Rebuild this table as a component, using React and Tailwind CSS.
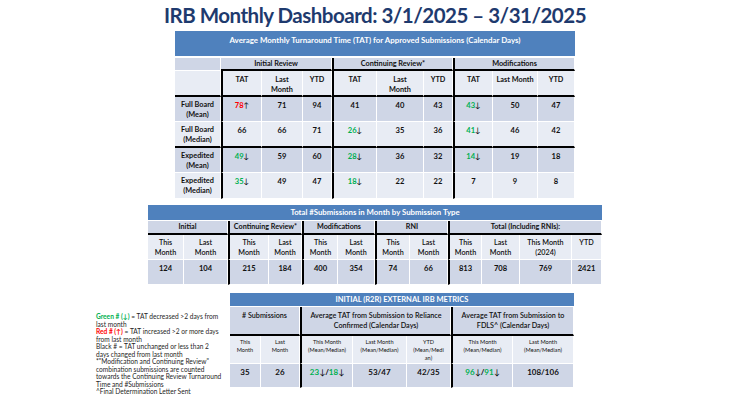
import React from "react";

const DARK = "bg-[#cfd6e6]";
const LIGHT = "bg-[#e8ecf4]";

function C({ bg, bl, bb, className = "", children }) {
  return (
    <div
      className={[
        "flex flex-col items-center text-center border-white border-r",
        bb ? "border-b-2 border-b-black" : "border-b",
        bl ? "border-l-2 border-l-black" : "",
        bg,
        className,
      ].join(" ")}
    >
      {children}
    </div>
  );
}

const G = ({ children }) => <span className="text-[#00b050]">{children}</span>;
const R = ({ children }) => <span className="text-[#ff0000]">{children}</span>;
const Dn = () => <span className="font-normal text-black">↓</span>;
const Up = () => <span className="font-normal text-black">↑</span>;

function Table1() {
  const rows = [
    { h: ["Full Board", "(Mean)"], bg: DARK, bb: false, cells: [<><R>78</R><Up /></>, "71", "94", "41", "40", "43", <><G>43</G><Dn /></>, "50", "47"] },
    { h: ["Full Board", "(Median)"], bg: LIGHT, bb: true, cells: ["66", "66", "71", <><G>26</G><Dn /></>, "35", "36", <><G>41</G><Dn /></>, "46", "42"] },
    { h: ["Expedited", "(Mean)"], bg: DARK, bb: false, cells: [<><G>49</G><Dn /></>, "59", "60", <><G>28</G><Dn /></>, "36", "32", <><G>14</G><Dn /></>, "19", "18"] },
    { h: ["Expedited", "(Median)"], bg: LIGHT, bb: false, cells: [<><G>35</G><Dn /></>, "49", "47", <><G>18</G><Dn /></>, "22", "22", "7", "9", "8"] },
  ];
  const heights = ["h-[25px]", "h-[26px]", "h-[25px]", "h-[26px]"];
  const colHdr = [["TAT"], ["Last", "Month"], ["YTD"], ["TAT"], ["Last", "Month"], ["YTD"], ["TAT"], ["Last Month"], ["YTD"]];
  return (
    <div className="w-[400px]">
      <div className="h-[25px] mb-[2px] bg-[#4f81bd] text-white font-bold text-[7.9px] leading-[10px] flex justify-center pt-[4px]">
        Average Monthly Turnaround Time (TAT) for Approved Submissions (Calendar Days)
      </div>
      <div className="grid grid-cols-[46px_41px_41px_29px_45px_47px_29px_40px_45px_37px] text-[7.3px] leading-[9.5px] text-[#111]">
        <C bg={DARK} className="h-[13px]" />
        <C bg={DARK} bb className="col-span-3 h-[13px] justify-center font-bold">Initial Review</C>
        <C bg={DARK} bb bl className="col-span-3 h-[13px] justify-center font-bold">Continuing Review*</C>
        <C bg={DARK} bb bl className="col-span-3 h-[13px] justify-center font-bold">Modifications</C>
        <C bg={LIGHT} bb className="h-[26px]" />
        {colHdr.map((t, i) => (
          <C key={i} bg={LIGHT} bb bl={i % 3 === 0} className="h-[26px] pt-[4px] font-bold">
            {t.map((l, j) => <div key={j}>{l}</div>)}
          </C>
        ))}
        {rows.map((r, ri) => (
          <React.Fragment key={ri}>
            <C bg={r.bg} bb={r.bb} className={heights[ri] + " pt-[3px] font-bold leading-[10px]"}>
              <div>{r.h[0]}</div>
              <div>{r.h[1]}</div>
            </C>
            {r.cells.map((c, ci) => (
              <C key={ci} bg={r.bg} bb={r.bb} bl={ci % 3 === 0} className={heights[ri] + " pt-[3px] font-bold text-[7.6px] leading-[10px]"}>
                <div>{c}</div>
              </C>
            ))}
          </React.Fragment>
        ))}
      </div>
    </div>
  );
}

function Table2() {
  const groups = [
    ["Initial", "col-span-2", false],
    ["Continuing Review*", "col-span-2", true],
    ["Modifications", "col-span-2", true],
    ["RNI", "col-span-2", true],
    ["Total (Including RNIs):", "col-span-4", true],
  ];
  const hdr = [
    ["This", "Month"], ["Last", "Month"], ["This", "Month"], ["Last", "Month"], ["This", "Month"], ["Last", "Month"],
    ["This", "Month"], ["Last", "Month"], ["This", "Month"], ["Last", "Month"], ["This Month", "(2024)"], ["YTD"],
  ];
  const data = ["124", "104", "215", "184", "400", "354", "74", "66", "813", "708", "769", "2421"];
  const blk = [2, 4, 6, 8];
  return (
    <div className="w-[454px] mt-[6px]">
      <div className="h-[15px] mb-[1px] bg-[#4f81bd] text-white font-bold text-[7.8px] leading-[15px] text-center">
        Total #Submissions in Month by Submission Type
      </div>
      <div className="grid grid-cols-[36px_44px_41px_33px_36px_37px_35px_38px_34px_38px_52px_30px] text-[7.2px] leading-[10px] text-[#111]">
        {groups.map(([t, span, bl], i) => (
          <C key={i} bg={DARK} bb bl={bl} className={span + " h-[14px] justify-center font-bold"}>{t}</C>
        ))}
        {hdr.map((t, i) => (
          <C key={i} bg={LIGHT} bl={blk.includes(i)} className="h-[25px] pt-[3px] font-semibold">
            {t.map((l, j) => <div key={j}>{l}</div>)}
          </C>
        ))}
        {data.map((d, i) => (
          <C key={i} bg={DARK} bl={blk.includes(i)} className="h-[25px] pt-[3px] font-bold text-[7.6px]">{d}</C>
        ))}
      </div>
    </div>
  );
}

function Table3() {
  const hdr = [
    ["This", "Month"], ["Last", "Month"], ["This Month", "(Mean/Median)"], ["Last Month", "(Mean/Median)"],
    ["YTD", "(Mean/Medi", "an)"], ["This Month", "(Mean/Median)"], ["Last Month", "(Mean/Median)"],
  ];
  const bls = [false, false, true, false, false, true, false];
  const data = [
    "35", "26",
    <><G>23</G><Dn /><span>/</span><G>18</G><Dn /></>,
    "53/47", "42/35",
    <><G>96</G><Dn /><span>/</span><G>91</G><Dn /></>,
    "108/106",
  ];
  return (
    <div className="w-[344px]">
      <div className="h-[13px] mb-[1px] bg-[#4f81bd] text-white font-bold text-[7.5px] leading-[13px] text-center">
        INITIAL (R2R) EXTERNAL IRB METRICS
      </div>
      <div className="grid grid-cols-[31px_39px_53px_54px_44px_62px_61px] text-[7.2px] leading-[10px] text-[#111]">
        <C bg={DARK} bb className="col-span-2 h-[29px] pt-[4px] font-semibold">
          # Submissions
        </C>
        <C bg={DARK} bb bl className="col-span-3 h-[29px] pt-[4px] font-semibold">
          <div>Average TAT from Submission to Reliance</div>
          <div>Confirmed (Calendar Days)</div>
        </C>
        <C bg={DARK} bb bl className="col-span-2 h-[29px] pt-[4px] font-semibold">
          <div>Average TAT from Submission to</div>
          <div>FDLS^ (Calendar Days)</div>
        </C>
        {hdr.map((t, i) => (
          <C key={i} bg={LIGHT} bl={bls[i]} className="h-[28px] pt-[2px] text-[5.6px] leading-[8px]">
            {t.map((l, j) => <div key={j}>{l}</div>)}
          </C>
        ))}
        {data.map((d, i) => (
          <C key={i} bg={DARK} bl={bls[i]} className="h-[24px] pt-[2px] font-bold text-[8px] leading-[12px]">
            <div>{d}</div>
          </C>
        ))}
      </div>
    </div>
  );
}

function Legend() {
  return (
    <div className="ml-[96px] w-[134px] pt-[20px] text-[6.6px] leading-[7.5px] text-[#262626] whitespace-nowrap">
      <div><span className="text-[#00b050] font-bold">Green # (↓)</span> = TAT decreased &gt;2 days from</div>
      <div>last month</div>
      <div><span className="text-[#ff0000] font-bold">Red # (↑)</span> = TAT increased &gt;2 or more days</div>
      <div>from last month</div>
      <div>Black # = TAT unchanged or less than 2</div>
      <div>days changed from last month</div>
      <div>*"Modification and Continuing Review"</div>
      <div>combination submissions are counted</div>
      <div>towards the Continuing Review Turnaround</div>
      <div>Time and #Submissions</div>
      <div>^Final Determination Letter Sent</div>
    </div>
  );
}

export default function App() {
  return (
    <div className="w-[750px] h-[400px] bg-white overflow-hidden flex flex-col items-center font-['Lato',sans-serif]">
      <div className="h-[31px] w-full text-center text-[20.5px] tracking-[-0.5px] font-bold text-[#1e3a6e]">
        IRB Monthly Dashboard: 3/1/2025 – 3/31/2025
      </div>
      <Table1 />
      <Table2 />
      <div className="w-full flex mt-[8px]">
        <Legend />
        <Table3 />
      </div>
    </div>
  );
}
